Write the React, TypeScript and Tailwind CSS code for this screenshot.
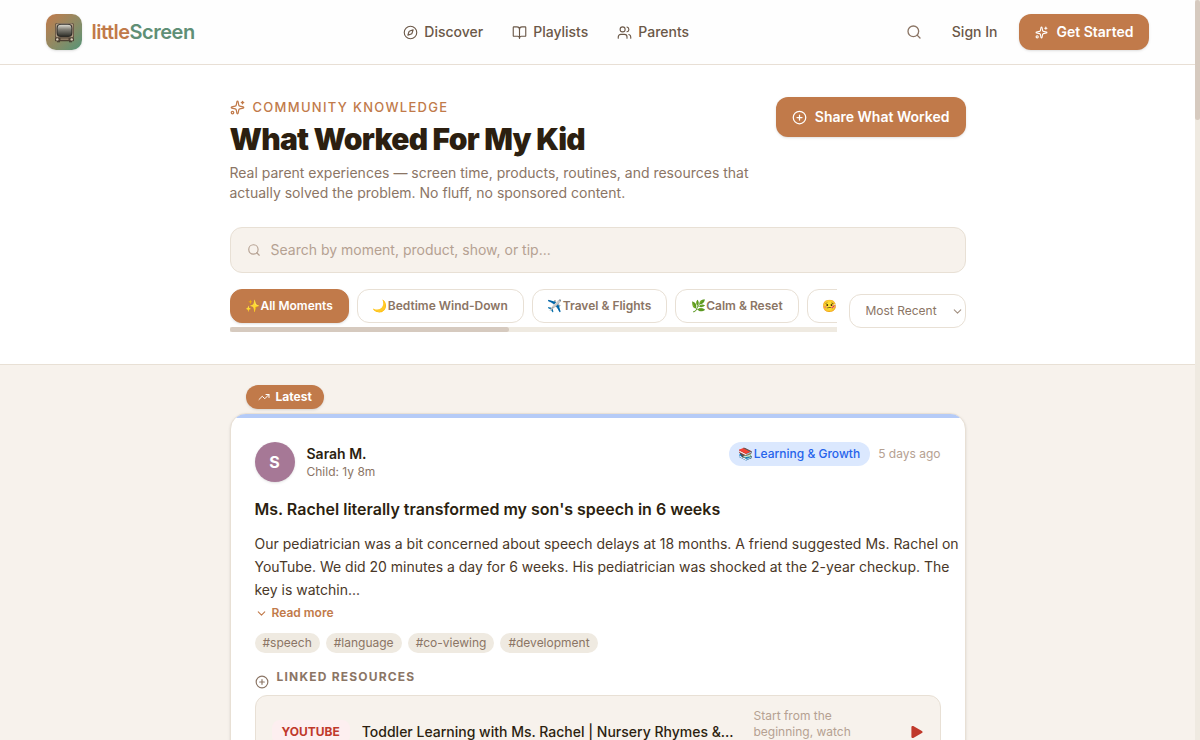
import { useState } from "react";
import {
  BookOpen,
  ChevronDown,
  CirclePlus,
  Compass,
  Search,
  Sparkles,
  TrendingUp,
  Users,
} from "lucide-react";

const navItems = [
  { label: "Discover", href: "#discover", icon: Compass },
  { label: "Playlists", href: "#playlists", icon: BookOpen },
  { label: "Parents", href: "#parents", icon: Users },
];

const moments = [
  { emoji: "✨", label: "All Moments" },
  { emoji: "🌙", label: "Bedtime Wind-Down" },
  { emoji: "✈️", label: "Travel & Flights" },
  { emoji: "🌿", label: "Calm & Reset" },
  { emoji: "🤒", label: "Sick Day" },
];

const stories = [
  {
    author: "Sarah M.",
    child: "1y 8m",
    emoji: "📚",
    moment: "Learning & Growth",
    posted: "5 days ago",
    title: "Ms. Rachel literally transformed my son's speech in 6 weeks",
    body: "Our pediatrician was a bit concerned about speech delays at 18 months. A friend suggested Ms. Rachel on YouTube. We did 20 minutes a day for 6 weeks. His pediatrician was shocked at the 2-year checkup. The key is watchin...",
    tags: ["#speech", "#language", "#co-viewing", "#development"],
    resource: {
      source: "YouTube",
      title: "Toddler Learning with Ms. Rachel | Nursery Rhymes &...",
      note: "Start from the beginning, watch together",
    },
  },
];

type Story = (typeof stories)[number];

function Logo() {
  return (
    <a href="#home" className="flex items-center gap-[10px]">
      <span className="flex size-9 items-center justify-center rounded-[10px] bg-linear-to-br from-[#c17a4a] to-[#4f9477] shadow-sm">
        <svg viewBox="0 0 24 24" className="size-6">
          <defs>
            <linearGradient id="tv-glass" x1="0" y1="0" x2="0" y2="1">
              <stop offset="0" stopColor="#dddbd2" />
              <stop offset="0.4" stopColor="#85837a" />
              <stop offset="1" stopColor="#35352f" />
            </linearGradient>
          </defs>
          <rect x="3" y="3" width="19" height="15.5" rx="2" fill="#5f4d3b" />
          <rect x="3.8" y="3.6" width="17.4" height="14" rx="1.5" fill="#b09d86" />
          <rect x="4.6" y="4" width="15.8" height="13" rx="4" fill="#2e2c27" />
          <rect x="5.6" y="4.8" width="13.8" height="11" rx="3.4" fill="url(#tv-glass)" />
          <rect x="3" y="17.6" width="19" height="3.6" rx="0.8" fill="#4d4033" />
          <rect x="8.5" y="18.4" width="8" height="1.6" fill="#8f7c66" />
          <circle cx="5.3" cy="19.4" r="1.2" fill="#d8cdb9" />
          <circle cx="19.7" cy="19.4" r="1.2" fill="#d8cdb9" />
          <path d="M5 21.2h3v1H5zM17 21.2h3v1h-3z" fill="#3a3028" />
        </svg>
      </span>
      <span className="text-xl font-semibold tracking-tight text-[#c17a4a]">
        little<span className="text-[#5f8f76]">Screen</span>
      </span>
    </a>
  );
}

function Header() {
  return (
    <header className="border-b border-[#e8dfd5] bg-[#fefefe]">
      <div className="mx-auto flex h-16 max-w-6xl items-center justify-between px-6">
        <Logo />
        <nav className="flex items-center gap-[29px]">
          {navItems.map(({ label, href, icon: Icon }) => (
            <a key={label} href={href} className="flex items-center gap-[6px] text-sm font-medium text-[#6b5848]">
              <Icon className="size-[15px]" strokeWidth={1.8} />
              {label}
            </a>
          ))}
        </nav>
        <div className="flex items-center gap-2">
          <button aria-label="Search" className="p-2 text-[#8b7565]">
            <Search className="size-4" />
          </button>
          <a href="#sign-in" className="px-[14px] text-sm font-medium text-[#6b5848]">
            Sign In
          </a>
          <button className="flex h-9 items-center gap-2 rounded-xl bg-[#c17a4a] px-4 text-sm font-semibold text-white shadow-sm">
            <Sparkles className="size-[13px]" />
            Get Started
          </button>
        </div>
      </div>
    </header>
  );
}

function MomentFilter() {
  const [active, setActive] = useState("All Moments");

  return (
    <div className="mt-4 flex items-center gap-3">
      <div className="min-w-0 flex-1">
        <div className="flex gap-2 overflow-x-auto pb-1 [scrollbar-width:none]">
          {moments.map(({ emoji, label }) => (
            <button
              key={label}
              onClick={() => setActive(label)}
              className={`flex h-[34px] shrink-0 items-center rounded-xl border px-[15px] text-xs font-semibold ${
                active === label
                  ? "border-[#c17a4a] bg-[#c17a4a] text-white shadow-sm"
                  : "border-[#e8e0d5] bg-white text-[#8b7565]"
              }`}
            >
              <span>{emoji}</span>
              {label}
            </button>
          ))}
        </div>
        <div className="h-[5px] bg-[#efeae1]">
          <div className="h-full w-[46%] rounded-full bg-[#d6cabf]" />
        </div>
      </div>
      <div className="relative shrink-0">
        <select
          aria-label="Sort stories"
          className="h-[34px] w-[117px] appearance-none rounded-xl border border-[#e8e0d5] bg-white pl-4 text-xs text-[#8b7565]"
        >
          <option>Most Recent</option>
          <option>Most Helpful</option>
        </select>
        <ChevronDown className="pointer-events-none absolute top-[11px] right-[2px] size-[13px] text-[#a39182]" />
      </div>
    </div>
  );
}

function Hero() {
  return (
    <section className="border-b border-[#e8e0d5] bg-white">
      <div className="mx-auto max-w-3xl px-4 py-8">
        <div className="flex items-start justify-between gap-4">
          <div>
            <p className="flex items-center gap-2 text-[13px] leading-5 font-medium tracking-widest text-[#c17a4a] uppercase">
              <Sparkles className="size-[15px]" />
              Community Knowledge
            </p>
            <h1 className="mt-1 text-3xl font-black tracking-tight text-[#2c1f10]">What Worked For My Kid</h1>
            <p className="mt-[6px] max-w-[528px] text-sm text-[#8b7565]">
              Real parent experiences — screen time, products, routines, and resources that actually solved the
              problem. No fluff, no sponsored content.
            </p>
          </div>
          <button className="flex h-10 shrink-0 items-center gap-2 rounded-xl bg-[#c17a4a] px-4 text-sm font-semibold text-white shadow-sm">
            <CirclePlus className="size-[15px]" />
            Share What Worked
          </button>
        </div>
        <label className="mt-6 flex h-[46px] items-center gap-[10px] rounded-xl border border-[#e8e0d5] bg-[#f7f2ec] px-4 text-[#b5a192]">
          <Search className="size-[14px]" />
          <input
            type="search"
            aria-label="Search stories"
            placeholder="Search by moment, product, show, or tip..."
            className="flex-1 bg-transparent text-sm text-[#2c1f10] outline-none placeholder:text-[#b5a192]"
          />
        </label>
        <MomentFilter />
      </div>
    </section>
  );
}

function StoryCard({ story }: { story: Story }) {
  return (
    <article className="overflow-hidden rounded-2xl border border-[#e8e0d5] bg-white shadow-sm">
      <div className="h-1 bg-[#b5cbf7]" />
      <div className="p-6">
        <div className="flex items-start justify-between">
          <div className="flex items-center gap-3">
            <span className="flex size-10 items-center justify-center rounded-full bg-[#a67896] text-base font-bold text-white shadow-sm">
              {story.author[0]}
            </span>
            <div>
              <p className="text-sm leading-5 font-semibold text-[#2c1f10]">{story.author}</p>
              <p className="text-xs text-[#8b7565]">Child: {story.child}</p>
            </div>
          </div>
          <div className="flex items-center gap-2 text-xs">
            <span className="flex h-6 items-center rounded-full bg-[#dbe8fe] px-[10px] font-medium text-[#2563eb]">
              <span>{story.emoji}</span>
              {story.moment}
            </span>
            <time className="text-[#b5a192]">{story.posted}</time>
          </div>
        </div>
        <h2 className="mt-4 text-base leading-[22px] font-semibold text-[#2c1f10]">{story.title}</h2>
        <p className="mt-3 -mr-5 text-sm leading-[23px] text-[#4a3828]">{story.body}</p>
        <button className="mt-1 flex items-center gap-1 text-xs font-semibold text-[#c17a4a]">
          <ChevronDown className="size-[13px]" />
          Read more
        </button>
        <ul className="mt-3 flex gap-[6px]">
          {story.tags.map((tag) => (
            <li key={tag} className="rounded-full bg-[#efeae1] px-2 py-[2px] text-xs text-[#8b7565]">
              {tag}
            </li>
          ))}
        </ul>
        <div className="mt-4 flex items-start gap-2 text-[#8b7565]">
          <CirclePlus className="mt-[6px] size-[14px]" />
          <h3 className="text-xs font-bold tracking-widest uppercase">Linked Resources</h3>
        </div>
        <div className="mt-[6px] flex items-center gap-3 rounded-xl border border-[#e8e0d5] bg-[#f7f2ec] px-4 py-3">
          <span className="rounded-lg bg-[#fdeff0] px-[10px] py-1 text-xs font-bold text-[#c0392b] uppercase">
            {story.resource.source}
          </span>
          <p className="min-w-0 flex-1 truncate text-sm font-medium text-[#2c1f10]">{story.resource.title}</p>
          <p className="w-36 pr-5 text-xs text-[#b5a192]">{story.resource.note}</p>
          <button aria-label="Play" className="text-[#c0392b]">
            <svg viewBox="0 0 14 14" className="size-[14px]" fill="currentColor">
              <path d="M1.4 2.2v9.6c0 1 1 1.6 1.9 1.1l8.6-4.8c.9-.5.9-1.7 0-2.2L3.3 1.1c-.9-.5-1.9.1-1.9 1.1z" />
            </svg>
          </button>
        </div>
      </div>
    </article>
  );
}

export default function App() {
  return (
    <div className="flex h-screen bg-[#f7f2ec] font-[Inter,'Noto_Color_Emoji',sans-serif]">
      <div className="min-w-0 flex-1 overflow-y-auto [scrollbar-width:none]">
        <Header />
        <Hero />
        <main className="mx-auto flex max-w-3xl flex-col px-4 pt-5 pb-16">
          <span className="mb-1 ml-4 flex h-6 items-center gap-[6px] self-start rounded-full bg-[#c17a4a] px-3 text-xs font-bold text-white shadow-sm">
            <TrendingUp className="size-3" />
            Latest
          </span>
          {stories.map((story) => (
            <StoryCard key={story.title} story={story} />
          ))}
        </main>
      </div>
      <div className="w-[5px] bg-[#efeae1]">
        <div className="h-[120px] rounded-full bg-[#d6cabf]" />
      </div>
    </div>
  );
}
